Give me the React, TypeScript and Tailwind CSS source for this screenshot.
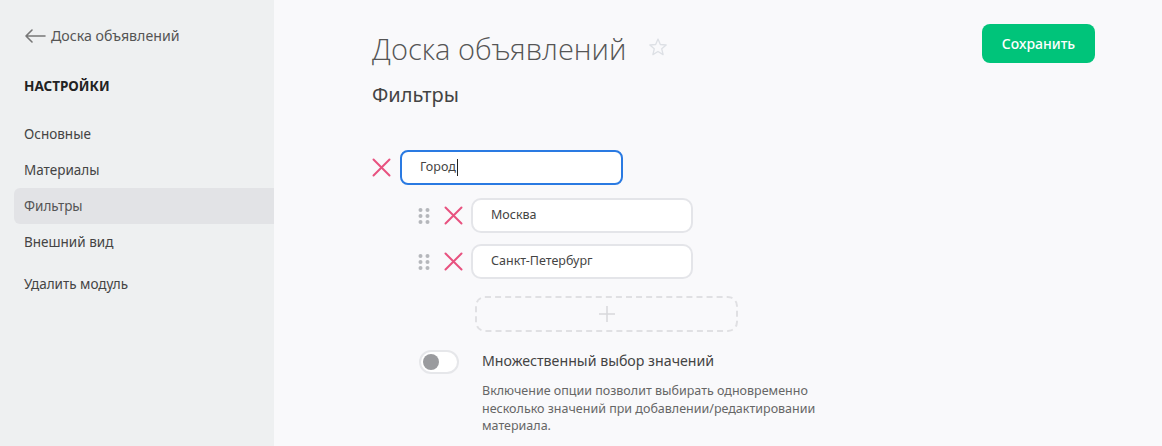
import { useState } from 'react';

const DragDots = () => (
  <svg width="12" height="16" viewBox="0 0 12 16" className="shrink-0">
    {[0, 1, 2].map((r) =>
      [0, 1].map((c) => <circle key={`${r}-${c}`} cx={2.5 + c * 7} cy={2 + r * 6} r="2" fill="#b5b7bb" />)
    )}
  </svg>
);

const Cross = () => (
  <svg width="19" height="19" viewBox="0 0 19 19" className="shrink-0">
    <path d="M1.5 1.5 L17.5 17.5 M17.5 1.5 L1.5 17.5" stroke="#e8527f" strokeWidth="2" strokeLinecap="round" />
  </svg>
);

export default function App() {
  const [multi, setMulti] = useState(false);
  const menu = ['Основные', 'Материалы', 'Фильтры', 'Внешний вид'];

  return (
    <div className="flex h-[446px] w-[1162px] overflow-hidden bg-[#f9f9fb] font-['Noto_Sans',sans-serif]">
      {/* сайдбар */}
      <aside className="w-[274px] shrink-0 bg-[#eef0f1] pl-[14px] pt-[24px]">
        <div className="flex h-[24px] items-center gap-[5px] pl-[10px] text-[14.2px] text-[#555]">
          <svg width="22" height="14" viewBox="0 0 22 14">
            <path d="M21 7 H2 M8 1 L2 7 L8 13" stroke="#777" strokeWidth="1.6" fill="none" strokeLinecap="round" strokeLinejoin="round" />
          </svg>
          <span className="leading-none">Доска объявлений</span>
        </div>
        <div className="mt-[26px] pl-[10px] text-[13.5px] font-bold leading-[24px] text-[#222]">НАСТРОЙКИ</div>
        <nav className="mt-[18px] flex flex-col">
          {menu.map((m) => (
            <div
              key={m}
              className={`flex h-[36px] items-center rounded-l-[6px] pl-[10px] text-[13.5px] ${
                m === 'Фильтры' ? 'bg-[#e2e3e6] text-[#555]' : 'text-[#444]'
              }`}
            >
              {m}
            </div>
          ))}
          <div className="mt-[6px] flex h-[36px] items-center pl-[10px] text-[13.5px] text-[#444]">Удалить модуль</div>
        </nav>
      </aside>

      {/* контент */}
      <main className="flex-1 pl-[98px] pr-[67px] pt-[24px]">
        <div className="flex items-start justify-between">
          <div>
            <div className="flex h-[48px] items-center gap-[22px]">
              <h1 className="font-['Open_Sans',sans-serif] text-[29px] font-light leading-none text-[#555]">
                Доска объявлений
              </h1>
              <svg width="20" height="20" viewBox="0 0 24 24" className="mt-[-2px]">
                <path
                  d="M12 2.5 L14.8 9 L21.8 9.6 L16.5 14.2 L18.1 21.1 L12 17.4 L5.9 21.1 L7.5 14.2 L2.2 9.6 L9.2 9 Z"
                  stroke="#dde0e5"
                  strokeWidth="1.6"
                  fill="none"
                  strokeLinejoin="round"
                />
              </svg>
            </div>
            <h2 className="mt-[10px] text-[20px] leading-[26px] text-[#444]">Фильтры</h2>
          </div>
          <button className="h-[39px] w-[113px] rounded-[8px] bg-[#00c47a] text-[14px] font-medium text-white">
            Сохранить
          </button>
        </div>

        {/* фильтр */}
        <div className="mt-[42px]">
          <div className="flex items-center gap-[9px]">
            <Cross />
            <div className="flex h-[35px] w-[223px] items-center rounded-[8px] border-2 border-[#2a7ae2] bg-white pl-[18px] text-[12.5px] text-[#444]">
              Город<span className="ml-[1px] inline-block h-[17px] w-[1px] bg-[#222]" />
            </div>
          </div>

          <div className="ml-[46px] mt-[13px] flex flex-col gap-[11px]">
            {['Москва', 'Санкт-Петербург'].map((v) => (
              <div key={v} className="flex items-center">
                <DragDots />
                <span className="ml-[14px]">
                  <Cross />
                </span>
                <div className="ml-[8px] flex h-[35px] w-[222px] items-center rounded-[10px] border-2 border-[#e4e5e9] bg-white pl-[18px] text-[12.5px] text-[#444]">
                  {v}
                </div>
              </div>
            ))}
            <div className="ml-[57px] mt-[6px] flex h-[36px] w-[263px] items-center justify-center rounded-[10px] border-2 border-dashed border-[#e0e0e3]">
              <svg width="18" height="18" viewBox="0 0 18 18">
                <path d="M9 1 V17 M1 9 H17" stroke="#d7d8db" strokeWidth="1.5" />
              </svg>
            </div>
          </div>

          <div className="ml-[47px] mt-[16px] flex items-start gap-[23px]">
            <button
              onClick={() => setMulti(!multi)}
              className="mt-[2px] flex h-[24px] w-[40px] shrink-0 items-center rounded-full border-2 border-[#e6e7ea] bg-white px-[2px]"
            >
              <span className={`h-[16px] w-[16px] rounded-full bg-[#9a9b9e] ${multi ? 'ml-auto' : ''}`} />
            </button>
            <div>
              <div className="text-[14.2px] leading-[26px] text-[#444]">Множественный выбор значений</div>
              <p className="mt-[8px] w-[340px] text-[12.5px] leading-[17.5px] text-[#666]">
                Включение опции позволит выбирать одновременно несколько значений при добавлении/редактировании
                материала.
              </p>
            </div>
          </div>
        </div>
      </main>
    </div>
  );
}
